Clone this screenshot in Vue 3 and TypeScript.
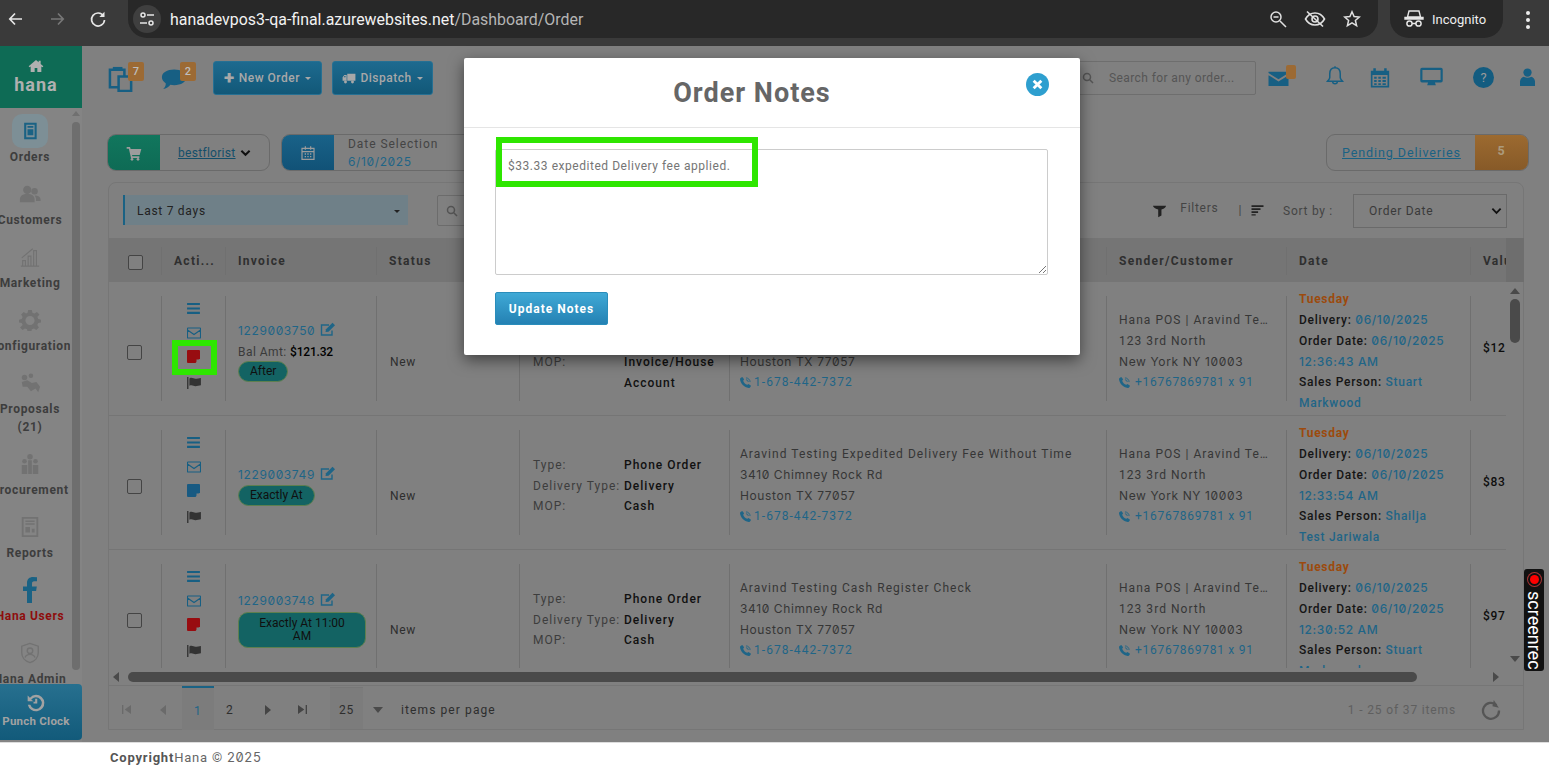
<script setup lang="ts">
interface NavItem { icon: string; label: string; sub?: string; active?: boolean; red?: boolean }
interface Row {
  inv: string; edit: number; bal?: string; pill: string; pillWide?: boolean; note: string;
  typeVal: string; dtype: string; mop: string; mop2?: string;
  name: string; time: string; person: string; person2: string; val: string;
}
const nav: NavItem[] = [
  { icon: 'orders', label: 'Orders', active: true },
  { icon: 'users', label: 'Customers' },
  { icon: 'chart', label: 'Marketing' },
  { icon: 'gear', label: 'Configuration' },
  { icon: 'hands', label: 'Proposals', sub: '(21)' },
  { icon: 'proc', label: 'Procurement' },
  { icon: 'report', label: 'Reports' },
  { icon: 'fb', label: 'Hana Users', red: true },
  { icon: 'shield', label: 'Hana Admin' },
]
const rows: Row[] = [
  { inv: '1229003750', edit: 1, bal: '$121.32', pill: 'After', note: '#980c10', typeVal: 'Phone Order', dtype: 'Delivery', mop: 'Invoice/House', mop2: 'Account', name: 'Aravind Testing Expedited Delivery Fee After', time: '12:36:43 AM', person: 'Stuart', person2: 'Markwood', val: '$121.32' },
  { inv: '1229003749', edit: 1, pill: 'Exactly At', note: '#185a82', typeVal: 'Phone Order', dtype: 'Delivery', mop: 'Cash', name: 'Aravind Testing Expedited Delivery Fee Without Time', time: '12:33:54 AM', person: 'Shailja', person2: 'Test Jariwala', val: '$83.33' },
  { inv: '1229003748', edit: 1, pill: 'Exactly At 11:00 AM', pillWide: true, note: '#980c10', typeVal: 'Phone Order', dtype: 'Delivery', mop: 'Cash', name: 'Aravind Testing Cash Register Check', time: '12:30:52 AM', person: 'Stuart', person2: 'Markwood', val: '$97.33' },
]
</script>

<template>
  <div class="page">
    <svg class="sprite" aria-hidden="true">
      <symbol id="i-home" viewBox="0 0 24 24"><path d="M12 3 1 12.500l1.300 1.500L4 12.600V21h6v-6h4v6h6v-8.400l1.700 1.400 1.300-1.500L19 9V4h-3v2.400z"/></symbol>
      <symbol id="i-orders" viewBox="0 0 24 24"><path fill-rule="evenodd" d="M5 2h15v20H5zM7.500 4.500v15h10v-15zM9 6h7v2H9zM9 10h7v7H9z"/></symbol>
      <symbol id="i-users" viewBox="0 0 24 24"><circle cx="9" cy="7.500" r="4.500"/><circle cx="17" cy="9" r="3.500"/><path d="M1 21v-3c0-4 3-6 8-6s8 2 8 6v3zM18.500 13.500c3 .3 5 1.800 5 4.500v1.500H18.500c.4-2.500-.2-4.400-1.500-5.700z"/></symbol>
      <symbol id="i-chart" viewBox="0 0 24 24"><g fill="none" stroke="currentColor" stroke-width="1.200"><path d="M2 22h20M4 22v-6h3v6M10 22V11h3v11M16 22V5h3v17M3 13 15 3"/></g></symbol>
      <symbol id="i-gear" viewBox="0 0 24 24"><path fill-rule="evenodd" d="M10 1h4l.6 3 2.300 1 2.600-1.700 2.800 2.800L20 8.700l1 2.300 3 .6v3l-3 .6-1 2.300 1.700 2.600-2.800 2.800-2.600-1.700-2.300 1-.6 3h-4l-.6-3-2.300-1-2.600 1.700-2.800-2.800L4 17.500l-1-2.300-3-.6v-3l3-.6 1-2.300-1.700-2.600 2.800-2.800L7.700 5l1.700-1zM12 7.500a5 5 0 1 0 0 10 5 5 0 0 0 0-10z"/></symbol>
      <symbol id="i-hands" viewBox="0 0 24 24"><circle cx="6" cy="6" r="3"/><circle cx="13" cy="4" r="2.500"/><path d="M3 11l6-2 5 3 5-1 4 5-2 6-3-4-5 3-4-5-5 0z"/></symbol>
      <symbol id="i-proc" viewBox="0 0 24 24"><circle cx="12" cy="4" r="3"/><circle cx="6" cy="9" r="2.500"/><circle cx="18" cy="9" r="2.500"/><path d="M3 13h6v10H3zM15 13h6v10h-6zM10 8h4v15h-4z"/></symbol>
      <symbol id="i-report" viewBox="0 0 24 24"><path fill-rule="evenodd" d="M3 1h18v22H3zM5 3v18h14V3zM7 5h10v1.500H7zM7 8h10v1.500H7zM7 12h5v6H7zM14 14h3v4h-3z"/></symbol>
      <symbol id="i-fb" viewBox="0 0 14 26"><path d="M4 26V14H0V9.500h4V6c0-4 2.500-6 6-6l4 .3v4h-2.700C9.300 4.300 9 5.300 9 6.800v2.700h4.800l-.7 4.500H9v12z"/></symbol>
      <symbol id="i-shield" viewBox="0 0 24 24"><path fill="none" stroke="currentColor" stroke-width="1.500" d="M12 1.500 3 4.500V12c0 5 4 9 9 10.500 5-1.500 9-5.500 9-10.500V4.500z"/><circle cx="12" cy="9.500" r="3" fill="none" stroke="currentColor" stroke-width="1.500"/><path fill="none" stroke="currentColor" stroke-width="1.500" d="M6.500 17c1-2.500 3-3.500 5.500-3.500s4.500 1 5.500 3.500"/></symbol>
      <symbol id="i-clock" viewBox="0 0 24 24"><path d="M12 2a10 10 0 1 1-9.800 12h3a7 7 0 1 0 1-6L9 10H2V3l2.700 2.700A10 10 0 0 1 12 2z"/><path d="M11 7h2.500v5.500H9V10.500h2z"/></symbol>
      <symbol id="i-dup" viewBox="0 0 28 28"><path fill="none" stroke="currentColor" stroke-width="2.600" d="M2 5h15v18H2z"/><path fill="#808080" stroke="currentColor" stroke-width="2.600" d="M11 12h13v15H11z"/><path d="M5 2h10v2.500H5z"/></symbol>
      <symbol id="i-chat" viewBox="0 0 32 28"><path d="M15 3c8 0 14 3.500 14 9s-6 9-14 9c-1.500 0-3-.2-4.300-.4C9 23 6 25 2.500 25.500 4.500 23.500 5.500 21.500 5.500 19 3 17 1 15 1 12c0-5.500 6-9 14-9z"/></symbol>
      <symbol id="i-truck" viewBox="0 0 24 18"><path d="M9 1h14v12H9zM1 13V7l3-4h4v10zM3 7h3V4.500H4.500z"/><circle cx="6" cy="15" r="2.500"/><circle cx="18" cy="15" r="2.500"/></symbol>
      <symbol id="i-cart" viewBox="0 0 24 24"><path d="M1 3h5l1 3h16l-2.500 9H9l.5 2H20v2.500H7.500L4.300 5.500H1z"/><circle cx="9" cy="21.500" r="2"/><circle cx="18" cy="21.500" r="2"/></symbol>
      <symbol id="i-cal" viewBox="0 0 24 24"><path fill="none" stroke="currentColor" stroke-width="1.800" d="M3 5h18v16.500H3zM3 10h18M8 2v5M16 2v5"/><path d="M7 12.500h2v2H7zM11 12.500h2v2h-2zM15 12.500h2v2h-2zM7 16.500h2v2H7zM11 16.500h2v2h-2zM15 16.500h2v2h-2z"/></symbol>
      <symbol id="i-search" viewBox="0 0 24 24"><path fill="none" stroke="currentColor" stroke-width="3" d="M10 3a7 7 0 1 0 0 14 7 7 0 0 0 0-14zM15 15l7 7"/></symbol>
      <symbol id="i-mail" viewBox="0 0 24 18"><path d="M0 1h24v1.500L12 10 0 2.500zM0 5l12 7.500L24 5v13H0z"/></symbol>
      <symbol id="i-bell" viewBox="0 0 24 28"><path fill="none" stroke="currentColor" stroke-width="2" d="M12 3c-5 0-7 4-7 8v5c0 2-1.500 3-3 5h20c-1.500-2-3-3-3-5v-5c0-4-2-8-7-8zM12 1v2M9 22c0 3 6 3 6 0"/></symbol>
      <symbol id="i-calg" viewBox="0 0 24 24"><path fill-rule="evenodd" d="M1 4h3V1h3v3h10V1h3v3h3v20H1zM3 9v13h18V9zM5 11h3v2.500H5zM10 11h3v2.500h-3zM15 11h4v2.500h-4zM5 15h3v2.500H5zM10 15h3v2.500h-3zM15 15h4v2.500h-4zM5 19h3v2H5zM10 19h3v2h-3zM15 19h4v2h-4z"/></symbol>
      <symbol id="i-mon" viewBox="0 0 26 22"><path fill-rule="evenodd" d="M2 1h22a2 2 0 0 1 2 2v13a2 2 0 0 1-2 2h-7l1 3H8l1-3H2a2 2 0 0 1-2-2V3a2 2 0 0 1 2-2zm.5 2.500V15h21V3.500z"/></symbol>
      <symbol id="i-user" viewBox="0 0 20 24"><circle cx="10" cy="6" r="5.500"/><path d="M0 24v-6c0-4 3-6 5-6.500 3 2 7 2 10 0 2 .5 5 2.500 5 6.500v6z"/></symbol>
      <symbol id="i-funnel" viewBox="0 0 20 20"><path d="M0 1h20c0 2-2 4-7 6v9l-5 3V7C3 5 0 3 0 1z"/></symbol>
      <symbol id="i-sort" viewBox="0 0 20 20"><path d="M0 2h20v3H0zM0 7h15v3H0zM0 12h11v3H0zM0 17h7v2H0z"/></symbol>
      <symbol id="i-menu" viewBox="0 0 14 12"><path d="M0 0h14v2.300H0zM0 4.800h14v2.300H0zM0 9.600h14V12H0z"/></symbol>
      <symbol id="i-env" viewBox="0 0 14 12"><path fill="none" stroke="currentColor" stroke-width="1.100" d="M1 1h12a.5.5 0 0 1 .5.500v9a.5.5 0 0 1-.5.500H1a.5.5 0 0 1-.5-.500v-9A.5.5 0 0 1 1 1zM.5 3 7 7.500 13.500 3"/></symbol>
      <symbol id="i-note" viewBox="0 0 13 13"><path d="M1 0h11a1 1 0 0 1 1 1v7.500L8.500 13H1a1 1 0 0 1-1-1V1a1 1 0 0 1 1-1z"/><path fill="#808080" d="M9.500 9.500H13L9.500 13z"/></symbol>
      <symbol id="i-flag" viewBox="0 0 15 13"><path d="M0 0h1.500v13H0zM2.500 1.500c3-1.500 4.500.5 6.500.5s4-1 6-1v8c-2 0-4 1-6 1S5.500 8 2.500 9.500z"/></symbol>
      <symbol id="i-edit" viewBox="0 0 16 15"><path fill="none" stroke="currentColor" stroke-width="1.400" d="M12 8.500V13H1.500V3H9"/><path d="M6 7.200 12.500.8l2.500 2.400-6.500 6.500L5.500 10z"/></symbol>
      <symbol id="i-phone" viewBox="0 0 12 12"><path d="M2.500 0 4.500 2.500 3.500 4c.5 1.800 2.200 3.700 4.500 4.500l1.300-1L12 9.500c-.5 1.500-1.500 2.500-2.500 2.500C4.500 11.500.5 7 0 2.500 0 1.500 1 .5 2.500 0z"/><path fill="none" stroke="currentColor" d="M6.500 1a4.500 4.500 0 0 1 4.500 4.500M6.500 3A2.500 2.500 0 0 1 9 5.500"/></symbol>
      <symbol id="i-refresh" viewBox="0 0 20 20"><path fill="none" stroke="currentColor" stroke-width="2.300" d="M15.500 5A8 8 0 1 0 18 10.500"/><path d="M12 .5V7h6.500z" transform="rotate(12 15 4)"/></symbol>
    </svg>

    <header class="chrome">
      <div class="chrome-nav">
        <svg class="cbtn" viewBox="0 0 18 18" width="18" height="18"><path d="M15 9H3M8 3.500 2.800 9 8 14.500" fill="none" stroke="#e6e6e6" stroke-width="1.700"/></svg>
        <svg class="cbtn" viewBox="0 0 18 18" width="18" height="18"><path d="M3 9h12M10 3.500 15.200 9 10 14.500" fill="none" stroke="#777" stroke-width="1.700"/></svg>
        <svg class="cbtn" viewBox="0 0 18 18" width="18" height="18"><path d="M14.500 6A6.500 6.500 0 1 0 15.500 10" fill="none" stroke="#e6e6e6" stroke-width="1.700"/><path d="M15.500 1.800V7h-5.200z" fill="#e6e6e6"/></svg>
      </div>
      <div class="omnibox">
        <span class="tune">
          <svg viewBox="0 0 16 16" width="16" height="16"><g fill="none" stroke="#e6e6e6" stroke-width="1.500"><circle cx="4" cy="4" r="2"/><path d="M8 4h7M1 12h7"/><circle cx="12" cy="12" r="2"/></g></svg>
        </span>
        <span class="url">hanadevpos3-qa-final.azurewebsites.net<span class="url-path">/Dashboard/Order</span></span>
        <span class="omni-icons">
          <svg viewBox="0 0 18 18" width="18" height="18"><g fill="none" stroke="#e0e0e0" stroke-width="1.500"><circle cx="7" cy="7" r="5"/><path d="M11 11l6 6M4.500 7h5"/></g></svg>
          <svg viewBox="0 0 22 18" width="22" height="18"><g fill="none" stroke="#e0e0e0" stroke-width="1.600"><path d="M1.500 9C4 4.500 7.500 3 11 3s7 1.500 9.500 6c-2.500 4.500-6 6-9.500 6S4 13.500 1.500 9z"/><circle cx="11" cy="9" r="3"/><path d="M3 1.500 19 16.500"/></g></svg>
          <svg viewBox="0 0 18 18" width="18" height="18"><path d="M9 1.800 11.100 6.600l5.200.5-3.900 3.400 1.200 5.100L9 12.900l-4.600 2.700 1.200-5.100L1.700 7.100l5.200-.5z" fill="none" stroke="#e0e0e0" stroke-width="1.500"/></svg>
        </span>
      </div>
      <div class="incog">
        <svg viewBox="0 0 20 18" width="20" height="18"><path d="M5 1h10l1.500 6h-13zM1 7.500h18V9H1z" fill="none" stroke="#e6e6e6" stroke-width="1.400"/><g fill="none" stroke="#e6e6e6" stroke-width="1.500"><circle cx="5.500" cy="13.500" r="2.600"/><circle cx="14.500" cy="13.500" r="2.600"/><path d="M8 13.500h4"/></g></svg>
        <span>Incognito</span>
      </div>
      <div class="kebab"><i></i><i></i><i></i></div>
    </header>

    <div class="app">
      <aside class="side">
        <div class="logo">
          <svg class="logo-i"><use href="#i-home" /></svg>
          <span>hana</span>
        </div>
        <div class="side-body">
          <nav class="side-list">
            <a v-for="n in nav" :key="n.label" class="nav" :class="{ tall: n.sub, red: n.red }">
              <span class="nav-ico" :class="{ on: n.active }">
                <svg :class="'ic-' + n.icon"><use :href="'#i-' + n.icon" /></svg>
              </span>
              <span class="nav-t">{{ n.label }}</span>
              <span v-if="n.sub" class="nav-t">{{ n.sub }}</span>
            </a>
          </nav>
          <div class="side-scroll"><i></i><span></span></div>
        </div>
        <div class="punch">
          <svg><use href="#i-clock" /></svg>
          <span>Punch Clock</span>
        </div>
      </aside>

      <main class="main">
        <div class="top">
          <span class="badged b1">
            <svg class="t-dup"><use href="#i-dup" /></svg><b>7</b>
          </span>
          <span class="badged b2">
            <svg class="t-chat"><use href="#i-chat" /></svg><b>2</b>
          </span>
          <button class="tbtn new"><span class="plus">+</span> New Order <i class="caret"></i></button>
          <button class="tbtn disp"><svg class="t-truck"><use href="#i-truck" /></svg> Dispatch <i class="caret"></i></button>
          <span class="search">
            <svg class="s-i"><use href="#i-search" /></svg>
            <span>Search for any order...</span>
          </span>
          <span class="t-mail"><svg><use href="#i-mail" /></svg><em></em></span>
          <svg class="t-bell"><use href="#i-bell" /></svg>
          <svg class="t-calg"><use href="#i-calg" /></svg>
          <svg class="t-mon"><use href="#i-mon" /></svg>
          <span class="t-help">?</span>
          <svg class="t-user"><use href="#i-user" /></svg>
        </div>

        <div class="sub">
          <div class="pill-group store">
            <span class="pg-ico green"><svg><use href="#i-cart" /></svg></span>
            <span class="store-t"><u>bestflorist</u>
              <svg viewBox="0 0 12 8" width="11" height="8"><path d="M1.500 1.500 6 6l4.500-4.500" fill="none" stroke="#111" stroke-width="2.200"/></svg>
            </span>
          </div>
          <div class="pill-group date">
            <span class="pg-ico blue"><svg><use href="#i-cal" /></svg></span>
            <span class="date-t">
              <span>Date Selection</span>
              <span class="date-v z">6/10/2025</span>
            </span>
          </div>
          <div class="pill-group pending">
            <u>Pending Deliveries</u>
            <span class="count">5</span>
          </div>
        </div>

        <section class="card">
          <div class="filters">
            <div class="range"><span>Last 7 days</span><i class="caret dark"></i></div>
            <span class="fsearch"><svg><use href="#i-search" /></svg></span>
            <div class="f-right">
              <svg class="f-fun"><use href="#i-funnel" /></svg>
              <span class="f-lbl">Filters</span>
              <span class="f-bar">|</span>
              <svg class="f-sort"><use href="#i-sort" /></svg>
              <span class="f-sortby">Sort by :</span>
              <div class="f-sel">
                <span>Order Date</span>
                <svg viewBox="0 0 12 8" width="11" height="8"><path d="M1.500 1.500 6 6l4.500-4.500" fill="none" stroke="#111" stroke-width="2"/></svg>
              </div>
            </div>
          </div>

          <div class="grid-wrap">
            <div class="table">
              <div class="tr head">
                <div class="c c-check"><span class="cb"></span></div>
                <div class="c"><span class="in">Acti...</span></div>
                <div class="c"><span class="in">Invoice</span></div>
                <div class="c"><span class="in">Status</span></div>
                <div class="c"><span class="in">Order Details</span></div>
                <div class="c"><span class="in">Recipient</span></div>
                <div class="c"><span class="in">Sender/Customer</span></div>
                <div class="c"><span class="in">Date</span></div>
                <div class="c"><span class="in">Value</span></div>
              </div>
              <div v-for="r in rows" :key="r.inv" class="tr">
                <div class="c c-check"><span class="cb low"></span></div>
                <div class="c"><div class="in acts">
                  <svg class="a-menu"><use href="#i-menu" /></svg>
                  <svg class="a-env"><use href="#i-env" /></svg>
                  <svg class="a-note" :style="{ color: r.note }"><use href="#i-note" /></svg>
                  <svg class="a-flag"><use href="#i-flag" /></svg>
                </div></div>
                <div class="c"><div class="in inv">
                  <div class="inv-no"><span class="link z">{{ r.inv }}</span><svg><use href="#i-edit" /></svg></div>
                  <div v-if="r.bal" class="bal">Bal Amt: <b>{{ r.bal }}</b></div>
                  <span class="tag" :class="{ wide: r.pillWide }">{{ r.pill }}</span>
                </div></div>
                <div class="c"><div class="in status">New</div></div>
                <div class="c"><div class="in details">
                  <div class="kv"><span>Type:</span><b>{{ r.typeVal }}</b></div>
                  <div class="kv"><span>Delivery Type:</span><b>{{ r.dtype }}</b></div>
                  <div class="kv"><span>MOP:</span><b>{{ r.mop }}</b></div>
                  <div v-if="r.mop2" class="kv"><span></span><b>{{ r.mop2 }}</b></div>
                </div></div>
                <div class="c"><div class="in addr recip">
                  <div>{{ r.name }}</div>
                  <div class="z">3410 Chimney Rock Rd</div>
                  <div class="z">Houston TX 77057</div>
                  <div class="phone"><svg><use href="#i-phone" /></svg>1-678-442-7372</div>
                </div></div>
                <div class="c"><div class="in addr">
                  <div class="ell">Hana POS | Aravind Testing</div>
                  <div>123 3rd North</div>
                  <div class="z">New York NY 10003</div>
                  <div class="phone wide-gap"><svg><use href="#i-phone" /></svg>+16767869781 x 91</div>
                </div></div>
                <div class="c"><div class="in dates">
                  <div class="day">Tuesday</div>
                  <div>Delivery: <span class="link z">06/10/2025</span></div>
                  <div>Order Date: <span class="link z">06/10/2025</span></div>
                  <div class="link z">{{ r.time }}</div>
                  <div>Sales Person: <span class="link">{{ r.person }}</span></div>
                  <div class="link">{{ r.person2 }}</div>
                </div></div>
                <div class="c"><div class="in val">{{ r.val }}</div></div>
              </div>
            </div>
            <div class="vbar">
              <div class="vhead"></div>
              <i class="tri up"></i>
              <span class="vthumb"></span>
              <i class="tri down"></i>
            </div>
          </div>

          <div class="hbar">
            <i class="tri left"></i>
            <span class="hthumb"></span>
            <i class="tri right"></i>
          </div>

          <footer class="pager">
            <svg class="p-i p1" viewBox="0 0 10 10"><path d="M0 0h1.500v10H0zM10 0v10L3 5z"/></svg>
            <i class="tri left soft p2"></i>
            <span class="pn cur">1</span>
            <span class="pn two">2</span>
            <i class="tri right p3"></i>
            <svg class="p-i p4" viewBox="0 0 10 10"><path d="M8.500 0H10v10H8.500zM0 0v10l7-5z"/></svg>
            <span class="psize">25</span>
            <i class="tri down p5"></i>
            <span class="ppl">items per page</span>
            <span class="pcount">1 - 25 of 37 items</span>
            <svg class="p-ref"><use href="#i-refresh" /></svg>
          </footer>
        </section>
      </main>

      <div class="modal">
        <div class="m-head">
          <h2>Order Notes</h2>
          <span class="m-close">
            <svg viewBox="0 0 10 10" width="11" height="11"><path d="M1.500 1.500l7 7M8.500 1.500l-7 7" stroke="#fff" stroke-width="2.600"/></svg>
          </span>
        </div>
        <div class="m-body">
          <div class="m-area">
            <span>$33.33 expedited Delivery fee applied.</span>
            <svg class="grip" viewBox="0 0 10 10" width="10" height="10"><path d="M9 2 2 9M9 6 6 9" stroke="#777" stroke-width="1"/></svg>
          </div>
          <button class="m-btn">Update Notes</button>
        </div>
      </div>
    </div>

    <footer class="foot"><b>Copyright</b>Hana © <span class="z">2025</span></footer>

    <div class="mark mark-a"></div>
    <div class="mark mark-b"></div>
    <div class="srec"><i></i><span>screenrec</span></div>
  </div>
</template>

<style>
html, body { margin: 0; background: #fff; overflow: hidden; }
</style>

<style scoped>
.page { position: relative; width: 1549px; height: 768px; overflow: hidden; display: flex; flex-direction: column; font-family: Roboto, "Liberation Sans", sans-serif; font-size: 12px; letter-spacing: .72px; color: #333; }
.sprite { display: none; }
svg { fill: currentColor; flex: none; }
.z { font-family: Inter, Roboto, sans-serif; font-variant-numeric: slashed-zero; font-feature-settings: "zero"; letter-spacing: .62px; }
i { font-style: normal; }

.chrome { height: 46px; flex: none; background: #3a3a3a; display: flex; align-items: flex-start; color: #eee; letter-spacing: 0; }
.chrome-nav { display: flex; width: 128px; padding: 10px 0 0 7px; box-sizing: border-box; gap: 23px; }
.omnibox { width: 1250px; height: 38px; background: #282828; border-radius: 0 0 19px 19px; display: flex; align-items: center; box-sizing: border-box; padding: 0 17px 0 5px; }
.tune { width: 28px; height: 28px; border-radius: 50%; background: #3f3f3f; display: flex; align-items: center; justify-content: center; }
.url { margin-left: 9px; font-size: 15.900px; color: #f2f2f2; }
.url-path { color: #b5b5b5; }
.omni-icons { margin-left: auto; display: flex; gap: 17px; align-items: center; }
.incog { margin-left: 12px; width: 113px; height: 38px; background: #282828; border-radius: 0 0 19px 19px; display: flex; align-items: center; gap: 8px; padding-left: 14px; box-sizing: border-box; font-size: 13px; }
.kebab { margin: 11px 0 0 23px; display: flex; flex-direction: column; gap: 3px; }
.kebab i { width: 4px; height: 4px; border-radius: 50%; background: #eee; }

.app { position: relative; flex: 1; display: flex; min-height: 0; background: #808080; }

.side { width: 82px; flex: none; background: #848484; display: flex; flex-direction: column; }
.logo { height: 62px; flex: none; background: #0e6b55; color: #b0b0b0; display: flex; flex-direction: column; align-items: center; font-size: 18px; font-weight: 700; letter-spacing: 1px; padding: 12px 10px 0 0; box-sizing: border-box; line-height: 20px; }
.logo-i { width: 18px; height: 16px; margin-bottom: 1px; }
.side-body { height: 576px; flex: none; display: flex; position: relative; }
.side-list { width: 60px; display: flex; flex-direction: column; align-items: center; padding-top: 6px; box-sizing: border-box; height: 576px; clip-path: inset(0 -10px 0 -10px); }
.nav { height: 63px; width: 60px; display: flex; flex-direction: column; align-items: center; flex: none; white-space: nowrap; color: #3d3d3d; font-weight: 700; font-size: 12px; letter-spacing: .65px; }
.nav.tall { height: 81px; }
.nav.red { color: #8e0d0d; }
.nav-ico { width: 36px; height: 34px; border-radius: 10px; display: flex; align-items: center; justify-content: center; color: #727272; flex: none; }
.nav-ico.on { background: #7d8f96; color: #1a6284; }
.nav-ico svg { width: 22px; height: 22px; }
.nav-ico .ic-orders { width: 20px; height: 20px; }
.nav-ico .ic-fb { width: 14px; height: 26px; color: #1a6284; }
.nav-t { line-height: 18px; height: 18px; }
.side-scroll { position: absolute; left: 72px; top: 0; width: 8px; height: 576px; display: flex; flex-direction: column; align-items: center; }
.side-scroll i { width: 0; height: 0; border: 4px solid transparent; border-top: 0; border-bottom: 5px solid #707070; margin-top: 3px; }
.side-scroll span { display: block; margin-top: 6px; width: 8px; height: 548px; border-radius: 4px; background: #6e6e6e; }
.punch { height: 56px; flex: none; border-radius: 0 4px 4px 0; background: linear-gradient(#27708f, #125a7a); color: #a2a2a2; font-weight: 700; font-size: 11.500px; letter-spacing: .25px; display: flex; flex-direction: column; align-items: center; padding: 9px 10px 0 0; box-sizing: border-box; white-space: nowrap; }
.punch svg { width: 20px; height: 20px; margin-bottom: 1px; }

.main { flex: 1; min-width: 0; display: flex; flex-direction: column; padding-left: 26px; box-sizing: border-box; }
.top { height: 62px; flex: none; display: flex; align-items: flex-start; padding-top: 15px; box-sizing: border-box; }
.badged { position: relative; display: block; }
.badged b { position: absolute; width: 16px; height: 19px; border-radius: 2px; background: #9c6a34; color: #bdbdbd; font-size: 11px; font-weight: 500; display: flex; align-items: center; justify-content: center; letter-spacing: 0; }
.b1 { width: 36px; height: 30px; padding-top: 2px; }
.b1 b { left: 20px; top: 1px; }
.t-dup { width: 27px; height: 27px; margin-top: 2px; color: #175f83; }
.b2 { width: 36px; height: 30px; margin-left: 17px; }
.b2 b { left: 19px; top: 1px; }
.t-chat { width: 28px; height: 26px; margin-top: 5px; color: #175f83; }
.tbtn { height: 34px; border: 1px solid #267093; border-radius: 3px; background: linear-gradient(#1d6a8f, #125878); color: #a8a8a8; font: 500 12px Roboto, sans-serif; letter-spacing: .5px; padding: 0; display: flex; align-items: center; justify-content: center; gap: 4px; }
.new { width: 109px; margin-left: 16px; }
.disp { width: 101px; margin-left: 10px; }
.plus { font-size: 19px; font-weight: 900; line-height: 12px; }
.t-truck { width: 14px; height: 11px; }
.caret { width: 0; height: 0; border: 3px solid transparent; border-top: 3.500px solid currentColor; border-bottom: 0; margin-left: 1px; }
.caret.dark { color: #222; border-width: 3.500px 3.500px 0; }
.search { margin-left: 637px; width: 186px; height: 34px; border: 1px solid #6e6e6e; border-radius: 2px; box-sizing: border-box; display: flex; align-items: center; color: #555; letter-spacing: .4px; padding-left: 11px; gap: 15px; }
.s-i { width: 12px; height: 12px; color: #555; }
.t-mail { position: relative; margin-left: 12px; display: block; width: 28px; height: 26px; color: #175f83; }
.t-mail svg { width: 21px; height: 15px; position: absolute; left: 0; top: 10px; }
.t-mail em { position: absolute; left: 18px; top: 4px; width: 10px; height: 14px; background: #9c6a34; border-radius: 2px; }
.t-bell { width: 18px; height: 22px; color: #175f83; margin: 4px 0 0 30px; }
.t-calg { width: 20px; height: 21px; color: #175f83; margin: 6px 0 0 26px; }
.t-mon { width: 23px; height: 19px; color: #175f83; margin: 6px 0 0 30px; }
.t-help { width: 21px; height: 21px; margin: 6px 0 0 30px; border-radius: 50%; background: #135c80; color: #9a9a9a; display: flex; align-items: center; justify-content: center; font-size: 13px; letter-spacing: 0; }
.t-user { width: 15px; height: 18px; color: #175f83; margin: 7px 0 0 26px; }

.sub { height: 37px; margin-top: 26px; flex: none; display: flex; width: 1422px; margin-left: -1px; }
.pill-group { height: 37px; border: 1px solid #6a6a6a; border-radius: 9px; box-sizing: border-box; display: flex; overflow: hidden; }
.pg-ico { width: 52px; flex: none; display: flex; align-items: center; justify-content: center; color: #9c9c9c; }
.pg-ico.green { background: linear-gradient(#11765d, #0e6b55); }
.pg-ico.blue { background: linear-gradient(#196288, #115277); }
.pg-ico svg { width: 16px; height: 16px; }
.store { width: 163px; }
.store-t { margin-left: 18px; display: flex; align-items: center; gap: 4px; color: #144f6a; letter-spacing: .3px; }
.date { width: 260px; margin-left: 11px; }
.date-t { margin-left: 14px; display: flex; flex-direction: column; line-height: 18px; color: #444; letter-spacing: .95px; }
.date-v { color: #1f6587; }
.pending { margin-left: auto; width: 203px; align-items: center; padding-left: 15px; color: #1a6284; justify-content: space-between; border-radius: 9px; letter-spacing: .92px; font-size: 12.500px; }
.count { width: 53px; height: 100%; background: linear-gradient(#9c6a30, #875a28); color: #ab9a7c; display: flex; align-items: center; justify-content: center; font-weight: 700; padding-bottom: 4px; box-sizing: border-box; }

.card { margin-top: 11px; width: 1416px; height: 548px; flex: none; border: 1px solid #767676; border-radius: 8px 8px 0 0; box-sizing: border-box; display: flex; flex-direction: column; background: #808080; }
.filters { height: 55px; flex: none; display: flex; align-items: flex-start; padding: 12px 0 0 14px; box-sizing: border-box; }
.range { width: 285px; height: 30px; box-sizing: border-box; background: #6f8088; border-left: 2px solid #1a6284; display: flex; align-items: center; justify-content: space-between; padding: 2px 8px 0 12px; color: #222; }
.fsearch { margin-left: 29px; width: 60px; height: 31px; border: 1px solid #6c6c6c; border-radius: 2px; box-sizing: border-box; display: flex; align-items: center; padding-left: 8px; color: #555; }
.fsearch svg { width: 12px; height: 12px; }
.f-right { margin-left: auto; display: flex; align-items: center; padding-right: 16px; height: 34px; margin-top: -1px; color: #444; }
.f-fun { width: 13px; height: 13px; color: #222; }
.f-lbl { margin-left: 14px; margin-bottom: 6px; }
.f-bar { margin-left: 20px; margin-bottom: 3px; }
.f-sort { width: 13px; height: 12px; margin-left: 9px; margin-bottom: 3px; color: #222; }
.f-sortby { margin-left: 19px; }
.f-sel { margin-left: 20px; width: 154px; height: 34px; border: 1px solid #6a6a6a; box-sizing: border-box; display: flex; align-items: center; justify-content: space-between; padding: 0 4px 0 15px; color: #3a3a3a; }

.grid-wrap { height: 430px; flex: none; display: flex; }
.table { width: 1397px; overflow: hidden; flex: none; }
.tr { display: grid; grid-template-columns: 52px 64px 151px 143px 210px 377px 180px 184px 100px; grid-template-rows: minmax(0, 1fr); height: 134px; border-bottom: 1px solid #757575; box-sizing: border-box; width: 1461px; }
.tr.head { height: 44px; background: #757575; border-bottom: 0; font-weight: 700; color: #2f2f2f; letter-spacing: 1.3px; }
.c { min-width: 0; min-height: 0; display: flex; align-items: center; padding: 14px 0; box-sizing: border-box; }
.head .c { padding: 9px 0 7px; }
.in { flex: 1; min-width: 0; height: 100%; border-left: 1px solid #707070; padding: 6px 0 0 12px; box-sizing: border-box; display: flex; flex-direction: column; justify-content: center; line-height: 20.800px; }
.head .in { padding-top: 0; }
.c-check { justify-content: center; padding-right: 2px; }
.cb { width: 15px; height: 15px; border: 1px solid #444; border-radius: 2px; background: #808080; box-sizing: border-box; margin-top: 3px; }
.low { margin-top: 7px; }
.acts { align-items: center; padding: 6px 0 0; justify-content: flex-start; color: #175f83; }
.acts svg { display: block; }
.a-menu { width: 13px; height: 11px; margin-top: 1px; }
.a-env { width: 14px; height: 12px; margin-top: 13px; }
.a-note { width: 13px; height: 13px; margin-top: 11px; }
.a-flag { width: 14px; height: 12px; margin-top: 14px; color: #333; }
.inv { align-items: flex-start; padding-top: 5px; }
.link { color: #1f6587; }
.inv-no { display: flex; align-items: center; gap: 5px; margin-top: 1px; }
.inv-no svg { width: 16px; height: 15px; color: #1f6587; margin-top: -3px; }
.bal { color: #3a3a3a; letter-spacing: .45px; }
.bal b { color: #000; font-weight: 500; letter-spacing: -.2px; }
.tag { margin-top: -1px; min-height: 21px; padding: 0 11px; border: 1px solid #5e7f4f; border-radius: 11px; background: #136363; color: #101010; box-sizing: border-box; letter-spacing: 0; line-height: 19px; display: block; }
.tag.wide { width: 128px; border-radius: 10px; text-align: center; line-height: 13px; padding: 4px 10px; margin-top: 0; }
.status { padding-left: 13px; padding-top: 27px; color: #2e2e2e; }
.details { padding-left: 13px; padding-top: 7px; color: #3d3d3d; letter-spacing: 1px; }
.kv { display: flex; }
.kv span { width: 91px; flex: none; white-space: nowrap; }
.kv b { font-weight: 500; color: #111; letter-spacing: 1px; }
.addr { color: #363636; white-space: nowrap; letter-spacing: 1.04px; }
.recip { padding-left: 10px; }
.addr .phone { color: #1f6587; display: flex; align-items: center; gap: 3px; letter-spacing: 1.04px; }
.addr .wide-gap { gap: 5px; letter-spacing: .72px; }
.phone svg { width: 11px; height: 11px; }
.ell { overflow: hidden; text-overflow: ellipsis; max-width: 152px; }
.dates { color: #151515; white-space: nowrap; font-weight: 500; }
.dates .link { font-weight: 500; }
.day { color: #9c4a0d; font-weight: 700; }
.val { color: #0d0d0d; font-weight: 500; padding-top: 0; }

.vbar { width: 18px; flex: none; display: flex; flex-direction: column; align-items: center; }
.vhead { width: 18px; height: 44px; background: #6e6e6e; align-self: stretch; }
.vthumb { width: 10px; height: 44px; border-radius: 5px; background: #4a4a4a; margin-top: 5px; }
.tri { width: 0; height: 0; display: block; border: 5px solid transparent; }
.tri.up { border-top: 0; border-bottom: 6px solid #4a4a4a; margin-top: 6px; }
.tri.down { border-bottom: 0; border-top: 6px solid #4a4a4a; margin-top: auto; margin-bottom: 6px; }
.tri.left { border-left: 0; border-right: 6px solid #4a4a4a; }
.tri.right { border-right: 0; border-left: 6px solid #4a4a4a; }
.hbar { height: 17px; flex: none; display: flex; align-items: center; padding-left: 4px; border-bottom: 1px solid #767676; }
.hthumb { width: 1289px; height: 10px; border-radius: 5px; background: #4a4a4a; margin-left: 9px; }
.hbar .right { margin-left: 76px; }

.pager { flex: 1; display: flex; align-items: center; color: #2e2e2e; letter-spacing: 1.1px; }
.p-i { width: 9px; height: 9px; color: #6a6a6a; margin-top: 3px; }
.p1 { margin-left: 13px; }
.tri.soft { border-right-color: #6a6a6a; }
.p2 { margin: 3px 0 0 29px; }
.pn { width: 32px; text-align: center; height: 44px; line-height: 48px; box-sizing: border-box; }
.cur { margin-left: 16px; border-top: 2px solid #1a6284; color: #1f6587; line-height: 46px; background: #7c7c7c; }
.two { margin-left: 0; }
.p3 { margin: 3px 0 0 19px; border-left-color: #444 !important; }
.p4 { margin-left: 27px; color: #444; }
.psize { margin-left: 23px; width: 33px; text-align: center; height: 42px; line-height: 44px; border-top: 1px solid #777; box-sizing: border-box; background: #7c7c7c; letter-spacing: .7px; }
.tri.p5 { border-top-color: #4a4a4a; margin: 4px 0 0 10px; }
.ppl { margin: 3px 0 0 18px; }
.pcount { margin: 3px 0 0 auto; color: #5f5f5f; letter-spacing: .85px; }
.p-ref { width: 20px; height: 20px; margin: 3px 22px 0 25px; color: #555; }

.modal { position: absolute; left: 464px; top: 12px; width: 616px; height: 297px; background: #fff; box-shadow: 0 5px 15px rgba(0,0,0,.5); border-radius: 2px; color: #666; }
.m-head { height: 70px; border-bottom: 1px solid #e5e5e5; box-sizing: border-box; position: relative; display: flex; justify-content: center; align-items: center; padding-right: 40px; }
.m-head h2 { margin: 0; font-size: 27px; font-weight: 700; letter-spacing: 1px; color: #666; }
.m-close { position: absolute; left: 562px; top: 15px; width: 23px; height: 23px; background: #2e9fcf; border-radius: 50%; display: flex; align-items: center; justify-content: center; }
.m-body { padding: 21px 32px 0 31px; }
.m-area { height: 126px; border: 1px solid #ccc; border-radius: 2px; box-sizing: border-box; padding: 8px 12px; position: relative; color: #757575; font-size: 12px; letter-spacing: .54px; line-height: 17px; }
.grip { position: absolute; right: 0; bottom: 0; }
.m-btn { margin-top: 17px; width: 113px; height: 33px; border: 1px solid #2a8dbb; border-radius: 2px; background: linear-gradient(#3fa9d6, #2481b3); color: #fff; font: 700 12px Roboto, sans-serif; letter-spacing: 1px; padding: 0; display: block; }

.foot { height: 26px; flex: none; background: #fff; border-top: 1px solid #ddd; box-sizing: border-box; padding-left: 110px; line-height: 28px; font-size: 13px; color: #666; letter-spacing: .8px; }
.foot b { font-weight: 700; color: #555; }

.mark { position: absolute; border: 6px solid #2ee600; box-sizing: border-box; pointer-events: none; }
.mark-a { left: 496px; top: 137px; width: 262px; height: 50px; }
.mark-b { left: 172px; top: 340px; width: 45px; height: 35px; }

.srec { position: absolute; left: 1524px; top: 569px; width: 20px; height: 102px; background: #111; border-radius: 3px; color: #fff; display: flex; flex-direction: column; align-items: center; padding-top: 4px; box-sizing: border-box; letter-spacing: 0; overflow: hidden; }
.srec i { width: 9px; height: 9px; flex: none; border-radius: 50%; background: #f00; box-shadow: 0 0 0 2px #111, 0 0 0 3px #a33; margin-top: 2px; }
.srec span { writing-mode: vertical-rl; font-size: 18px; line-height: 20px; margin-top: 7px; }
</style>
